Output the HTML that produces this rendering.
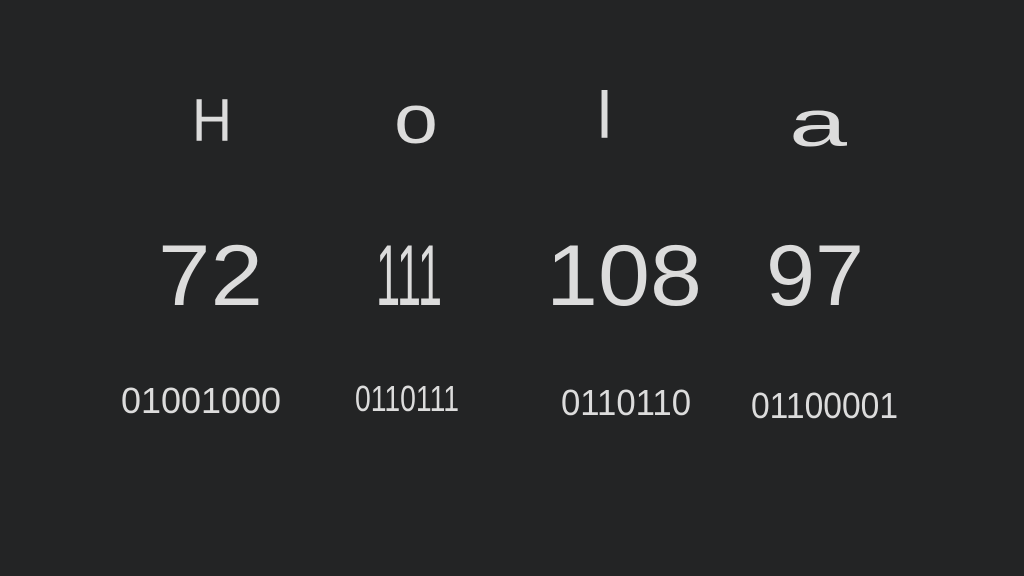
<!DOCTYPE html>
<html><head><meta charset="utf-8"><style>
html,body{margin:0;padding:0;background:#232425;}
svg{display:block}
</style></head><body>
<svg width="1024" height="576" viewBox="0 0 1024 576" xmlns="http://www.w3.org/2000/svg">
<rect width="1024" height="576" fill="#232425"/>
<g fill="#dcdcdc" font-family="Liberation Sans, sans-serif">
<text x="192" y="141" font-size="60" textLength="40" lengthAdjust="spacingAndGlyphs">H</text>
<text x="394" y="143" font-size="70" textLength="44" lengthAdjust="spacingAndGlyphs">o</text>
<text x="597" y="138" font-size="66" textLength="15" lengthAdjust="spacingAndGlyphs">l</text>
<text x="789" y="146" font-size="66" textLength="58" lengthAdjust="spacingAndGlyphs">a</text>
<text x="158" y="305" font-size="86" textLength="105" lengthAdjust="spacingAndGlyphs">72</text>
<text x="376" y="305" font-size="86" textLength="66" lengthAdjust="spacingAndGlyphs">111</text>
<text x="546" y="305" font-size="86" textLength="156" lengthAdjust="spacingAndGlyphs">108</text>
<text x="766" y="305" font-size="86" textLength="98" lengthAdjust="spacingAndGlyphs">97</text>
<text x="121" y="413" font-size="36" textLength="160" lengthAdjust="spacingAndGlyphs">01001000</text>
<text x="355" y="411" font-size="36" textLength="104" lengthAdjust="spacingAndGlyphs">0110111</text>
<text x="561" y="415" font-size="36" textLength="130" lengthAdjust="spacingAndGlyphs">0110110</text>
<text x="751" y="418" font-size="36" textLength="147" lengthAdjust="spacingAndGlyphs">01100001</text>
</g>
</svg>
</body></html>
